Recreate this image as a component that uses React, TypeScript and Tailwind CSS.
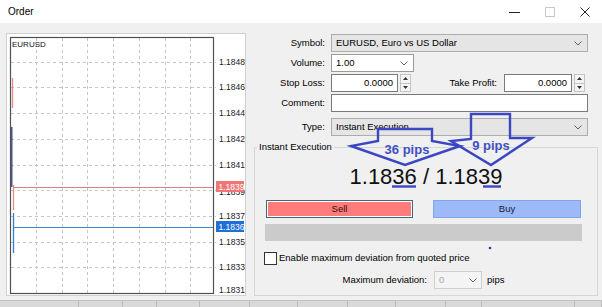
import React from "react";

const gridX = [29, 55, 80, 106, 132, 158, 183];
const gridY = [28, 53, 79, 105, 131, 156, 182, 208, 233];
const axis = [
  { y: 28, t: "1.1848" },
  { y: 53, t: "1.1846" },
  { y: 79, t: "1.1844" },
  { y: 105, t: "1.1842" },
  { y: 131, t: "1.1841" },
  { y: 158, t: "1.1839" },
  { y: 182, t: "1.1837" },
  { y: 208, t: "1.1835" },
  { y: 233, t: "1.1833" },
  { y: 256, t: "1.1831" },
];

function Chart() {
  return (
    <div className="h-[263px] w-[240px] shrink-0 border border-[#d0d0d0] bg-white">
      <svg width="238" height="261" viewBox="0 0 238 261" fontFamily="Liberation Sans, Arial, sans-serif">
        {gridX.map((x) => (
          <line key={x} x1={x + 0.5} y1={4} x2={x + 0.5} y2={259} stroke="#c4c4c4" strokeDasharray="3 3" />
        ))}
        {gridY.map((y) => (
          <line key={y} x1={4} y1={y + 0.5} x2={209} y2={y + 0.5} stroke="#c4c4c4" strokeDasharray="3 3" />
        ))}
        <rect x={3.5} y={3.5} width={203} height={256} fill="none" stroke="#505050" strokeWidth={1.2} />
        {axis.map((a) => (
          <text key={a.t} x={212} y={a.y + 3} fontSize={8.5} fill="#222">
            {a.t}
          </text>
        ))}
        {/* price lines */}
        <line x1={6} y1={153.5} x2={206} y2={153.5} stroke="#d98080" />
        <line x1={6} y1={193.5} x2={206} y2={193.5} stroke="#3a86d4" />
        {/* ticks */}
        <line x1={5.5} y1={44} x2={5.5} y2={74} stroke="#e08c8c" strokeWidth={1.3} />
        <line x1={4.8} y1={93} x2={4.8} y2={153} stroke="#2f3a86" strokeWidth={1.3} />
        <line x1={6.5} y1={151} x2={6.5} y2={176} stroke="#e08c8c" strokeWidth={1.3} />
        <line x1={6.5} y1={179} x2={6.5} y2={219} stroke="#2f7fd0" strokeWidth={1.3} />
        <text x={5} y={13} fontSize={8} fill="#111">
          EURUSD
        </text>
        <rect x={209} y={147} width={28} height={11} fill="#f07676" />
        <text x={211.5} y={155.5} fontSize={8.5} fill="#fff">
          1.1839
        </text>
        <rect x={209} y={187} width={28} height={11} fill="#1f6fd8" />
        <text x={211.5} y={195.5} fontSize={8.5} fill="#fff">
          1.1836
        </text>
      </svg>
    </div>
  );
}

function Chevron() {
  return (
    <svg width="8" height="5" viewBox="0 0 8 5">
      <path d="M0.5 0.5 L4 4 L7.5 0.5" fill="none" stroke="#606060" strokeWidth="1" />
    </svg>
  );
}

function Spinner() {
  return (
    <div className="ml-[2px] flex h-[18px] w-[11px] flex-col border border-[#c4c4c4] bg-[#f4f4f4]">
      <div className="flex flex-1 items-center justify-center border-b border-[#c4c4c4]">
        <svg width="5" height="3" viewBox="0 0 5 3">
          <path d="M0 3 L2.5 0 L5 3 Z" fill="#333" />
        </svg>
      </div>
      <div className="flex flex-1 items-center justify-center">
        <svg width="5" height="3" viewBox="0 0 5 3">
          <path d="M0 0 L2.5 3 L5 0 Z" fill="#333" />
        </svg>
      </div>
    </div>
  );
}

function Label({ children }: { children: React.ReactNode }) {
  return <span className="mr-[6px] w-[71px] shrink-0 text-right">{children}</span>;
}

function Combo({ text, className }: { text: string; className: string }) {
  return (
    <div className={`flex h-[18px] items-center justify-between border pl-[4px] pr-[5px] ${className}`}>
      <span>{text}</span>
      <Chevron />
    </div>
  );
}

function Overlay() {
  const c = "#3a46c2";
  return (
    <svg className="pointer-events-none absolute left-0 top-0" width="602" height="307" viewBox="0 0 602 307">
      <path
        d="M378 129 L432 129 L432 141 L460 146 L405 165 L351 146 L378 141 Z"
        fill="none"
        stroke={c}
        strokeWidth={2.4}
      />
      <path
        d="M471 114 L510 114 L510 138 L532 138 L491 165 L451 141 L471 139 Z"
        fill="none"
        stroke={c}
        strokeWidth={2.4}
      />
      <text x={407} y={154} fontSize={13} fontWeight={700} fill="#4150c4" textAnchor="middle" fontFamily="Liberation Sans, Arial, sans-serif">
        36 pips
      </text>
      <text x={491} y={150} fontSize={13} fontWeight={700} fill="#4150c4" textAnchor="middle" fontFamily="Liberation Sans, Arial, sans-serif">
        9 pips
      </text>
      <line x1={392} y1={186.5} x2={416} y2={186.5} stroke={c} strokeWidth={2.4} />
      <line x1={483} y1={186.5} x2={501} y2={186.5} stroke={c} strokeWidth={2.4} />
      <circle cx={490} cy={248} r={1.3} fill="#2a38a6" />
    </svg>
  );
}

export default function App() {
  return (
    <div className="relative h-[307px] w-[602px] overflow-hidden bg-[#f0f0f0] font-['Liberation_Sans',Arial,sans-serif] text-[9.5px] text-black">
      {/* title bar */}
      <div className="flex h-[23px] items-center justify-between bg-white pl-[8px] pr-[12px]">
        <span className="text-[10px]">Order</span>
        <div className="flex items-center gap-[25px]">
          <svg width="11" height="10" viewBox="0 0 11 10">
            <line x1="0" y1="5.5" x2="11" y2="5.5" stroke="#222" />
          </svg>
          <svg width="10" height="10" viewBox="0 0 10 10">
            <rect x="0.5" y="0.5" width="9" height="9" fill="none" stroke="#c8c8c8" />
          </svg>
          <svg width="10" height="10" viewBox="0 0 10 10">
            <path d="M0.5 0.5 L9.5 9.5 M9.5 0.5 L0.5 9.5" stroke="#222" />
          </svg>
        </div>
      </div>

      {/* body */}
      <div className="flex h-[277px] pl-[6px] pt-[10px]">
        <Chart />

        <div className="ml-[8px] flex w-[344px] flex-col pt-[1px]">
          <div className="flex flex-col gap-[2px] pr-[10px]">
            <div className="flex h-[18px] items-center">
              <Label>Symbol:</Label>
              <Combo text="EURUSD, Euro vs US Dollar" className="flex-1 border-[#adadad] bg-[#e5e5e5]" />
            </div>
            <div className="flex h-[18px] items-center">
              <Label>Volume:</Label>
              <Combo text="1.00" className="w-[83px] border-[#9a9a9a] bg-white" />
            </div>
            <div className="flex h-[18px] items-center">
              <Label>Stop Loss:</Label>
              <div className="flex h-[18px] w-[67px] items-center justify-end border border-[#7a7a7a] bg-white pr-[4px]">0.0000</div>
              <Spinner />
              <span className="w-[86px] text-right">Take Profit:</span>
              <div className="ml-[7px] flex h-[18px] w-[68px] items-center justify-end border border-[#7a7a7a] bg-white pr-[4px]">0.0000</div>
              <Spinner />
            </div>
            <div className="flex h-[18px] items-center">
              <Label>Comment:</Label>
              <div className="h-[18px] flex-1 border border-[#7a7a7a] bg-white" />
            </div>
            <div className="mt-[4px] flex h-[18px] items-center">
              <Label>Type:</Label>
              <Combo text="Instant Execution" className="flex-1 border-[#adadad] bg-[#e5e5e5]" />
            </div>
          </div>

          <fieldset className="mt-[5px] h-[155px] border border-[#d6d6d6]">
            <legend className="ml-[2px] px-[2px] leading-[12px]">Instant Execution</legend>
            <div className="mt-[12px] h-[24px] text-center text-[22px] leading-[24px] text-[#111]">1.1836 / 1.1839</div>

            <div className="mt-[11px] flex h-[18px] gap-[20px] pl-[11px]">
              <div className="w-[147px] border border-[#46667b] bg-white p-[1px]">
                <div className="flex h-full items-center justify-center bg-[#ff7c7c] text-[#2a1010]">Sell</div>
              </div>
              <div className="flex w-[148px] items-center justify-center border border-[#7ea6ec] bg-[#9db9f7] text-[#10203a]">Buy</div>
            </div>

            <div className="ml-[10px] mt-[6px] h-[17px] w-[317px] bg-[#cbcbcb]" />

            <div className="ml-[9px] mt-[11px] flex h-[13px] items-center">
              <div className="h-[13px] w-[13px] border border-[#333] bg-white" />
              <span className="ml-[2px]">Enable maximum deviation from quoted price</span>
            </div>

            <div className="mt-[6px] flex h-[18px] items-center">
              <span className="w-[172px] text-right">Maximum deviation:</span>
              <div className="ml-[7px] flex h-[18px] w-[48px] items-center justify-between border border-[#cfcfcf] bg-[#f4f4f4] pl-[4px] pr-[4px] text-[#a8a8a8]">
                <span>0</span>
                <Chevron />
              </div>
              <span className="ml-[5px]">pips</span>
            </div>
          </fieldset>
        </div>
      </div>

      {/* strip below window */}
      <div className="flex h-[7px] border-t border-[#c2c2c2] bg-[#d9d9d9]">
        {[79, 44, 34, 43, 50, 48, 50, 48, 50, 36, 93, 27].map((w, i) => (
          <div key={i} style={{ width: w }} className="h-full border-r border-[#bcbcbc]" />
        ))}
      </div>

      <Overlay />
    </div>
  );
}
